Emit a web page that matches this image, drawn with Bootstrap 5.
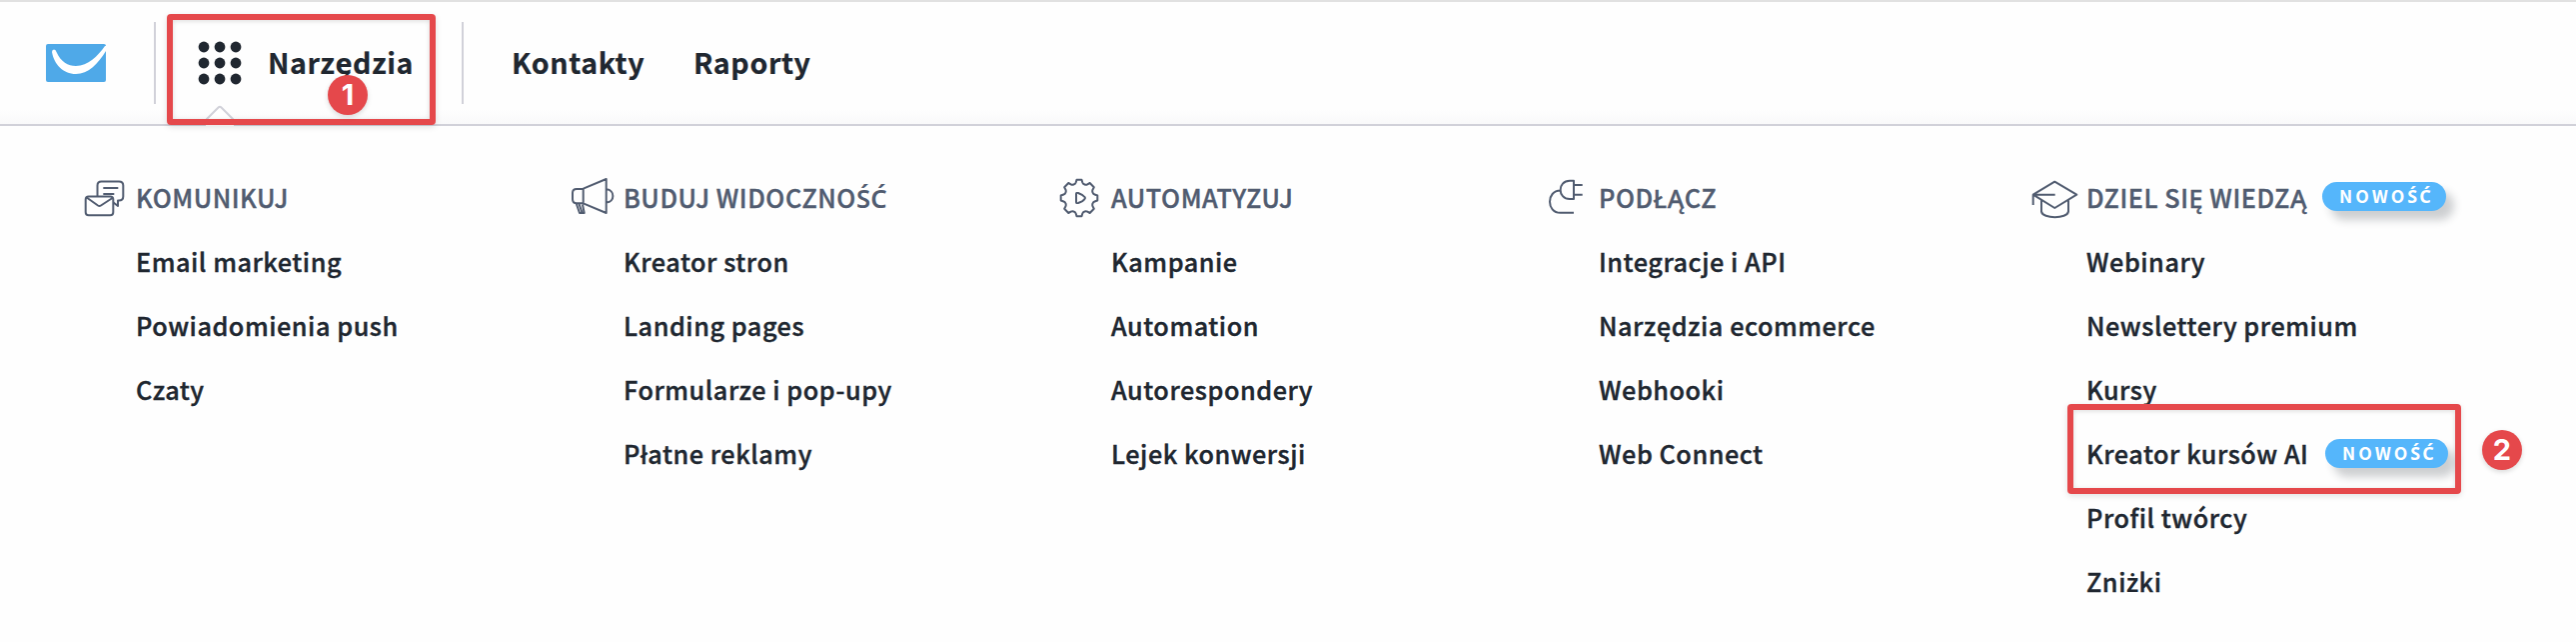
<!DOCTYPE html>
<html lang="pl">
<head>
<meta charset="utf-8">
<title>Narzędzia</title>
<link href="https://cdn.jsdelivr.net/npm/bootstrap@5.3.0/dist/css/bootstrap.min.css" rel="stylesheet">
<style>
body{font-family:"Noto Sans CJK SC","Noto Sans",sans-serif;color:#202730;background:#fefefe;overflow:hidden;height:642px}
.topbar{height:126px;border-top:2px solid #e1e1e1;border-bottom:2px solid #d1d1d9;padding:0 0 0 46px;background:linear-gradient(#fefefe 88%,#f9f9fa)}
.topbar .nav-link{font-weight:700;font-size:28.6px;line-height:40px;letter-spacing:.6px;color:#202730;padding:0 0 2px;-webkit-text-stroke:.2px}
.rule{width:2px;height:82px;background:#d1d1d9}
.tools{width:306px;height:122px;padding-left:42px}
.notch{left:50px;bottom:-2px}
.mark-box{border:6px solid #e5484b;border-radius:4px;box-shadow:0 2px 6px rgba(0,0,0,.12),inset 0 1px 5px rgba(0,0,0,.14);pointer-events:none}
.mark-dot{width:40px;height:40px;background:#e5484b;color:#fff;font:700 29px/40px Inter,sans-serif;letter-spacing:0;-webkit-text-stroke:0;box-shadow:0 2px 5px rgba(0,0,0,.15)}
.menu{display:grid;grid-template-columns:repeat(5,488px);padding:42px 0 0 80px}
.heading,.entry{height:64px;font-size:25.2px;line-height:58px;letter-spacing:.56px;font-weight:500;white-space:nowrap;-webkit-text-stroke:.4px}
.heading{color:#515c70}
.heading svg{width:56px;height:48px;margin-top:8px;flex:none;fill:none;stroke:#515c70;stroke-width:2;stroke-linejoin:round}
.entry{padding-left:56px}
.new-tag{width:124px;height:29px;border-radius:15px;background:#55b6fb;color:#fff;font-weight:700;font-size:17.6px;line-height:28px;letter-spacing:3px;-webkit-text-stroke:0;padding-left:17px;box-shadow:8px 9px 8px rgba(32,39,48,.22);margin-top:14px}
.acc{font-family:"Noto Sans",sans-serif;font-size:1.02em;line-height:1;font-weight:600;letter-spacing:.2px;-webkit-text-stroke:0}
.new-tag .acc{font-weight:700;letter-spacing:2px}
</style>
</head>
<body>
<header class="topbar d-flex align-items-center">
  <svg width="60" height="38" viewBox="0 0 60 38" aria-label="logo"><rect width="60" height="38" rx="2" fill="#4fa9e8"/><path d="M6 8Q6 5.500 8 5.500T10.500 8C15 18 22 22 30 22C42 22 52 12 59 2H60V7C52 20 42 30 30 30C17 30 8 20 6 8Z" fill="#fff"/></svg>
  <div class="rule" style="margin-left:48px"></div>
  <div class="tools position-relative d-flex align-items-center">
    <svg width="54" height="44" viewBox="0 0 54 44" fill="#202730"><circle cx="6" cy="6" r="5.400"/><circle cx="22" cy="6" r="5.400"/><circle cx="38" cy="6" r="5.400"/><circle cx="6" cy="22" r="5.400"/><circle cx="22" cy="22" r="5.400"/><circle cx="38" cy="22" r="5.400"/><circle cx="6" cy="38" r="5.400"/><circle cx="22" cy="38" r="5.400"/><circle cx="38" cy="38" r="5.400"/></svg>
    <a class="nav-link" style="margin-left:16px">Narzędzia</a>
    <svg class="notch position-absolute" width="28" height="21" viewBox="0 0 28 21"><path d="M0 15L12.500 2.500Q14 1 15.500 2.500L28 15V21H0Z" fill="#fff"/><path d="M0 15L12.500 2.500Q14 1 15.500 2.500L28 15" fill="none" stroke="#d1d1d9" stroke-width="2"/></svg>
    <span class="mark-box position-absolute" style="left:11px;top:12px;width:269px;height:111px"></span>
    <span class="mark-dot position-absolute rounded-circle text-center" style="left:172px;top:73px">1</span>
  </div>
  <div class="rule"></div>
  <nav class="d-flex">
    <a class="nav-link" style="margin-left:48px;width:182px">Kontakty</a>
    <a class="nav-link">Raporty</a>
  </nav>
</header>
<main class="menu">
  <section>
    <div class="heading d-flex align-items-start"><svg viewBox="0 0 56 48"><path d="M17.500 20V9.500Q17.500 5.500 21.500 5.500H39Q43.300 5.500 43.300 9.500V20.500Q43.300 24.500 39 24.500H38V30L33.500 26.500M23.300 12H38.300M23.300 18H34.300"/><rect x="5.700" y="20.500" width="27.600" height="18.800" rx="3"/><path d="M6.700 21.500L18 29.500Q19.500 30.500 21 29.500L32.500 22"/></svg><span>KOMUNIKUJ</span></div>
    <div class="entry">Email marketing</div><div class="entry">Powiadomienia push</div><div class="entry">Czaty</div>
  </section>
  <section>
    <div class="heading d-flex align-items-start"><svg viewBox="0 0 56 48"><path d="M15.700 12.700L38.700 3V37L15.700 27.300M15.700 13V27.300H9Q5 27.300 5 23.300V17Q5 13 9 13ZM39 13.300C47.500 14 47.500 26 39 26.500M8.700 27.500L12 37H16.700L15 28.500M11.500 28L14.500 36.500"/></svg><span>BUDUJ WIDOCZNO<span class="acc">ŚĆ</span></span></div>
    <div class="entry">Kreator stron</div><div class="entry">Landing pages</div><div class="entry">Formularze i pop-upy</div><div class="entry">Płatne reklamy</div>
  </section>
  <section>
    <div class="heading d-flex align-items-start"><svg viewBox="0 0 56 48"><path d="M20.700 6.500L21.500 3.700H26.500L27.300 6.500Q27.800 8 29.500 8.500Q31 9 32.300 8.300L34.700 7L38.800 11.200L37.600 13.600Q36.800 15 37.500 16.500Q38 18 39.500 18.500L42.300 19.500V24.500L39.500 25.500Q38 26 37.500 27.500Q36.800 29 37.600 30.400L38.800 32.800L34.700 37L32.300 35.700Q31 35 29.500 35.500Q27.800 36 27.300 37.500L26.500 40.300H21.500L20.700 37.500Q20.200 36 18.500 35.500Q17 35 15.700 35.700L13.300 37L9.200 32.800L10.400 30.400Q11.200 29 10.500 27.500Q10 26 8.500 25.500L5.700 24.500V19.500L8.500 18.500Q10 18 10.500 16.500Q11.200 15 10.400 13.600L9.200 11.200L13.300 7L15.700 8.300Q17 9 18.500 8.500Q20.200 8 20.700 6.500ZM21 18Q21 16.500 23 17Q28 19 29.500 21Q30.500 22 29.500 23Q28 25.500 23 27Q21 27.500 21 26Z"/></svg><span>AUTOMATYZUJ</span></div>
    <div class="entry">Kampanie</div><div class="entry">Automation</div><div class="entry">Autorespondery</div><div class="entry">Lejek konwersji</div>
  </section>
  <section>
    <div class="heading d-flex align-items-start"><svg viewBox="0 0 56 48"><path d="M31 4.800V23H27C14.500 23 14.500 4.800 27 4.800ZM31 9H39.700M31 18.700H39.700M17.500 14.500C3.500 14.500 3.500 36.800 17.500 36.800H31"/></svg><span>PODŁĄCZ</span></div>
    <div class="entry">Integracje i API</div><div class="entry">Narzędzia ecommerce</div><div class="entry">Webhooki</div><div class="entry">Web Connect</div>
  </section>
  <section>
    <div class="heading d-flex align-items-start"><svg viewBox="0 0 56 48"><path d="M24.300 5.700L46.300 18.700L24.300 32L2.700 18.700ZM24.700 18.700H2.700V29M11 24.500V35.500C12 43 37 43 38 35.500V24.500"/></svg><span style="width:236px">DZIEL SIĘ WIEDZĄ</span><span class="new-tag">NOWO<span class="acc">ŚĆ</span></span></div>
    <div class="entry">Webinary</div><div class="entry">Newslettery premium</div><div class="entry">Kursy</div>
    <div class="entry position-relative d-flex align-items-start"><span style="width:239px">Kreator kursów AI</span><span class="new-tag" style="margin-top:15px;width:123px">NOWO<span class="acc">ŚĆ</span></span>
      <span class="mark-box position-absolute" style="left:37px;top:-20px;width:394px;height:90px"></span>
      <span class="mark-dot position-absolute rounded-circle text-center" style="left:452px;top:6px">2</span>
    </div>
    <div class="entry">Profil twórcy</div><div class="entry">Zni<span class="acc">ż</span>ki</div>
  </section>
</main>
<script src="https://cdn.jsdelivr.net/npm/bootstrap@5.3.0/dist/js/bootstrap.bundle.min.js"></script>
</body>
</html>
